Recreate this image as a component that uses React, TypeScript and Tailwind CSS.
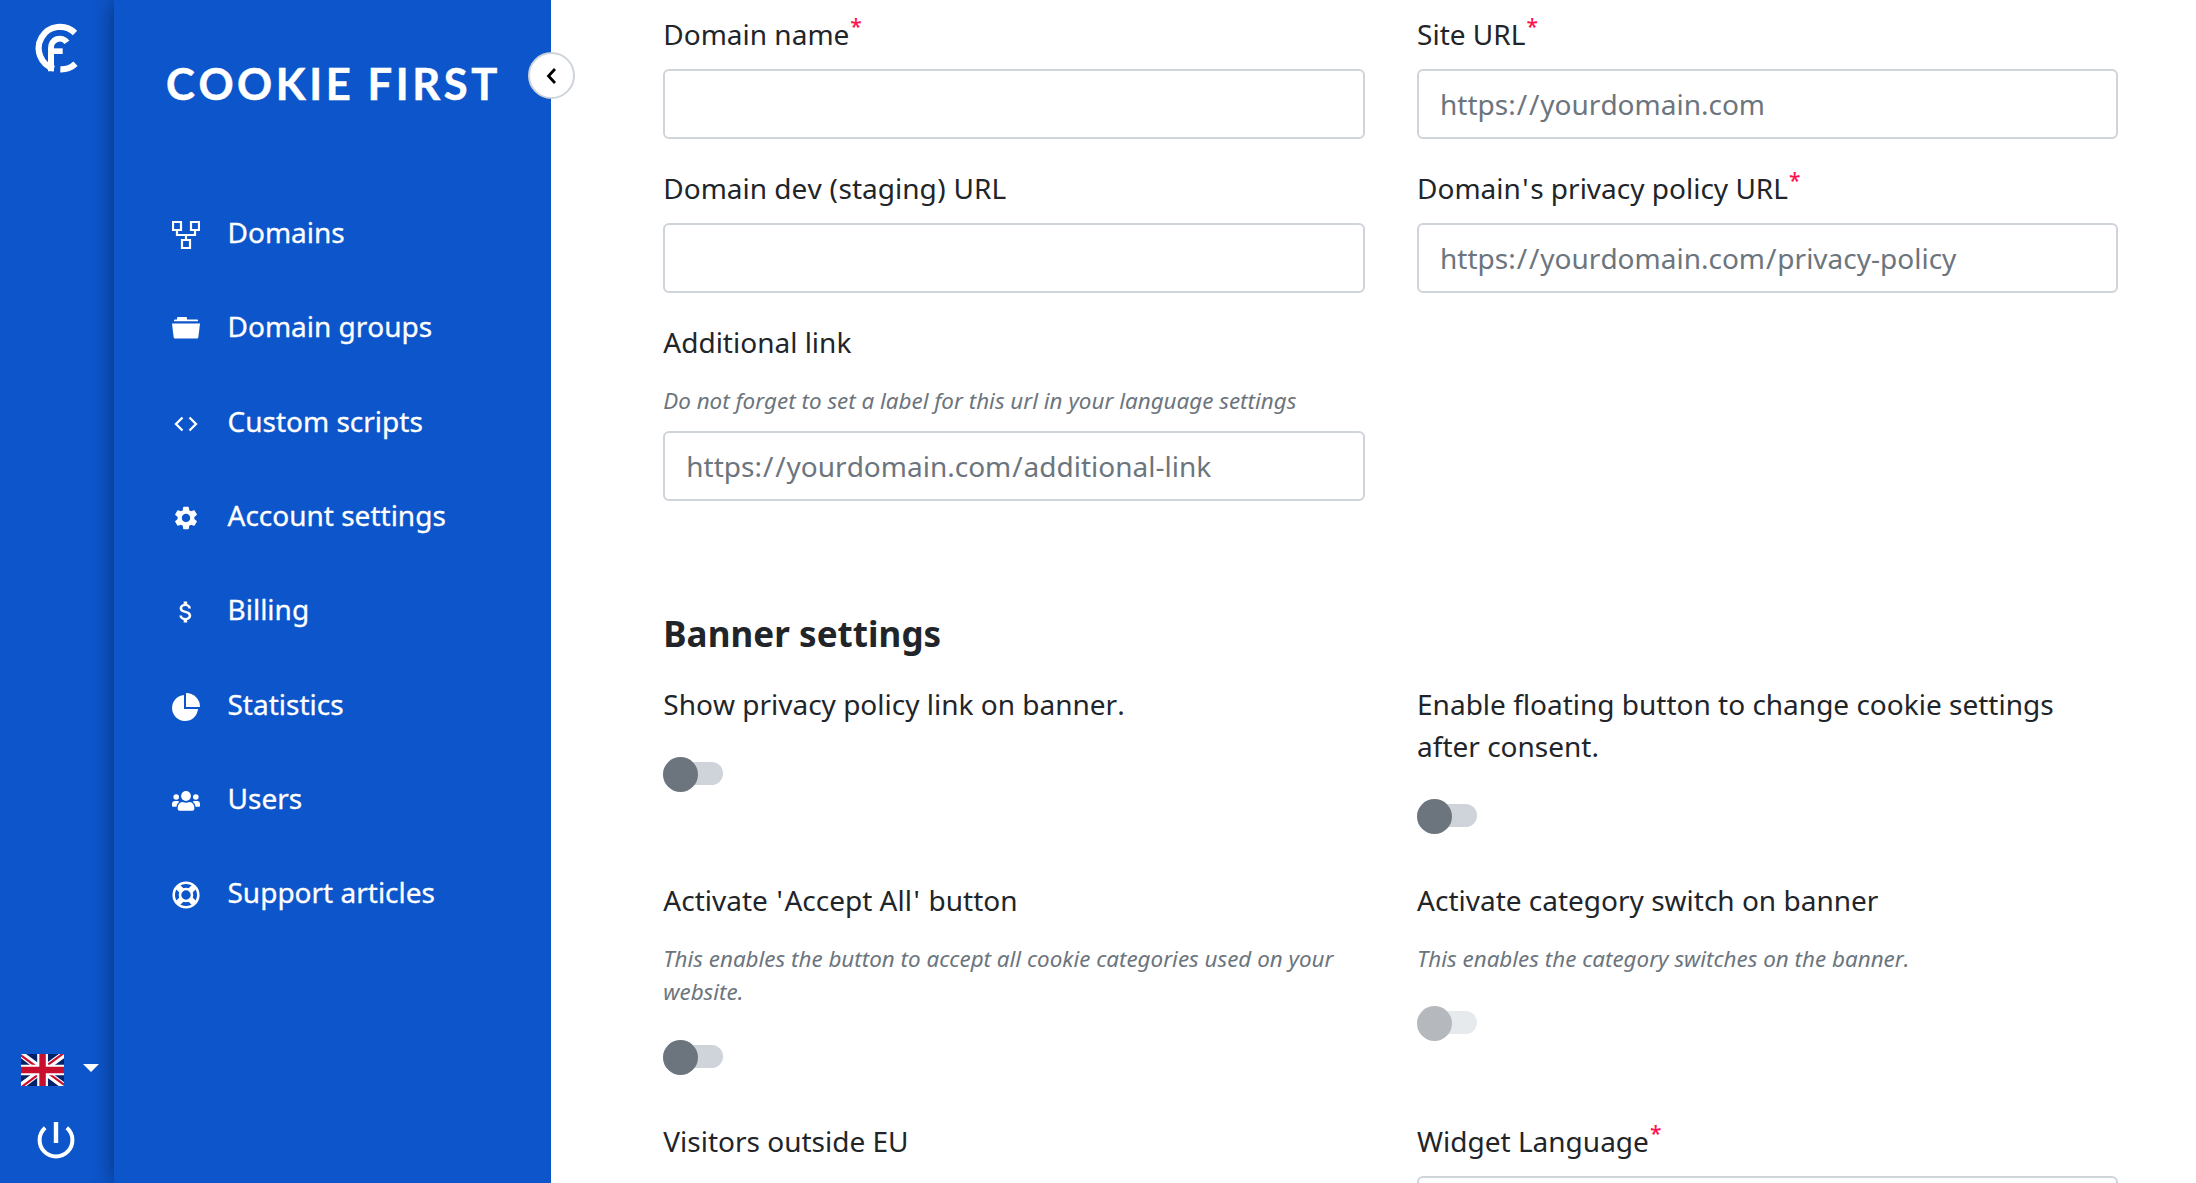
import React from "react";
import { MdSettings, MdAttachMoney } from "react-icons/md";

type IconProps = { className?: string };

function LogoMark() {
  return (
    <svg className="h-[50px] w-[44px]" viewBox="29 25 132 150" fill="none" stroke="#fff">
      <path d="M149 55A64 64 0 1 0 86 162" strokeWidth="18.500" />
      <path d="M77 170V100A26.500 26.500 0 0 1 125 83" strokeWidth="18" />
      <path d="M80 109.500H112" strokeWidth="17" />
      <path d="M105 164A64 64 0 0 0 150.500 147" strokeWidth="18.500" />
    </svg>
  );
}

function DomainsIcon({ className }: IconProps) {
  return (
    <svg className={className} viewBox="0 0 28 28" fill="none" stroke="#fff" strokeWidth="2.2">
      <path d="M1 1h8v8H1zM19 1h8v8h-8zM10 19h8v8h-8zM5 9v5h18V9M14 14v5" />
    </svg>
  );
}

function FolderIcon({ className }: IconProps) {
  return (
    <svg className={className} viewBox="0 0 28 28" fill="#fff">
      <path d="M2 6.300V5.500q0-1 1-1h2V3q0-1 1-1H14q1 0 1 1v1.500h10q1 0 1 1v.8z" />
      <path d="M0 8.500h28l-1.600 13.500q-.2 1.500-1.400 1.500H3Q1.800 23.500 1.600 22z" />
    </svg>
  );
}

function CodeIcon({ className }: IconProps) {
  return (
    <svg className={className} viewBox="0 0 28 28" fill="none" stroke="#fff" strokeWidth="2.3">
      <path d="M10.500 7.500 4 14l6.500 6.500M17.500 7.500 24 14l-6.500 6.500" />
    </svg>
  );
}

function GearIcon({ className }: IconProps) {
  return <MdSettings className={className} />;
}

function DollarIcon({ className }: IconProps) {
  return <MdAttachMoney className={className} />;
}

function PieIcon({ className }: IconProps) {
  return (
    <svg className={className} viewBox="0 0 28 28" fill="#fff">
      <path d="M12 2v14H26A13 13 0 1 1 12 2z" />
      <path d="M14 0a14 14 0 0 1 14 14H14z" />
    </svg>
  );
}

function UsersIcon({ className }: IconProps) {
  return (
    <svg className={className} viewBox="0 0 28 28" fill="#fff">
      <circle cx="14" cy="9" r="4.900" />
      <circle cx="4.200" cy="10" r="2.800" />
      <circle cx="23.800" cy="10" r="2.800" />
      <path d="M5.600 21.500q0-6 5-6.500 3.400 1.500 6.800 0 5 .5 5 6.500 0 2.200-2 2.200H7.600q-2 0-2-2.200z" />
      <path d="M0 19v-1.800Q0 14 3 14h2.500q1 0 1.800.7-2.600 1.800-2.900 5.100H1q-1 0-1-.8zM28 19v-1.800q0-3.200-3-3.200h-2.500q-1 0-1.800.7 2.600 1.800 2.900 5.100H27q1 0 1-.8z" />
    </svg>
  );
}

function SupportIcon({ className }: IconProps) {
  return (
    <svg className={className} viewBox="0 0 28 28" fill="none" stroke="#fff">
      <circle cx="14" cy="14" r="12.300" strokeWidth="2.600" />
      <circle cx="14" cy="14" r="6" strokeWidth="2.600" />
      <path d="M5.500 5.500 10 10M22.500 5.500 18 10M5.500 22.500 10 18M22.500 22.500 18 18" strokeWidth="6" />
    </svg>
  );
}

function Flag() {
  return (
    <svg className="h-8 w-[43px]" viewBox="0 0 640 480" preserveAspectRatio="none">
      <path fill="#012169" d="M0 0h640v480H0z" />
      <path fill="#FFF" d="m75 0 244 181L562 0h78v62L400 241l240 178v61h-80L320 301 81 480H0v-60l239-178L0 64V0h75z" />
      <path fill="#C8102E" d="m424 281 216 159v40L369 281h55zm-184 20 6 35L54 480H0l240-179zM640 0v3L391 191l2-44L590 0h50zM0 0l239 176h-60L0 42V0z" />
      <path fill="#FFF" d="M241 0v480h160V0H241zM0 160v160h640V160H0z" />
      <path fill="#C8102E" d="M0 193v96h640v-96H0zM273 0v480h96V0h-96z" />
    </svg>
  );
}

function PowerIcon() {
  return (
    <svg className="h-[38px] w-[38px]" viewBox="0 0 38 38" fill="none" stroke="#fff">
      <path d="M8.200 6.800A16.400 16.400 0 1 0 29.800 6.800" strokeWidth="4" />
      <path d="M19 1v21" strokeWidth="4.400" />
    </svg>
  );
}

const NAV = [
  { label: "Domains", Icon: DomainsIcon },
  { label: "Domain groups", Icon: FolderIcon },
  { label: "Custom scripts", Icon: CodeIcon },
  { label: "Account settings", Icon: GearIcon },
  { label: "Billing", Icon: DollarIcon },
  { label: "Statistics", Icon: PieIcon },
  { label: "Users", Icon: UsersIcon },
  { label: "Support articles", Icon: SupportIcon },
];

const PUNCTUATION_SPACING: Record<string, string> = {
  "'": "px-[1.5px]",
  "/": "px-[0.95px]",
  "(": "px-[0.6px]",
  ")": "px-[0.6px]",
};

/** Text with a little extra room round its slashes, quotes and parentheses. */
function Spaced({ text }: { text: string }) {
  return (
    <>
      {text.split(/(['/()])/).map((part, i) =>
        PUNCTUATION_SPACING[part] ? (
          <span key={i} className={PUNCTUATION_SPACING[part]}>
            {part}
          </span>
        ) : (
          part
        ),
      )}
    </>
  );
}

function Label({ text, required }: { text: string; required?: boolean }) {
  return (
    <div className="text-[28px] leading-[42px]">
      <Spaced text={text} />
      {required && <sup className="top-[-11px] ml-px text-[21px] leading-none font-medium text-[#ff1150]">*</sup>}
    </div>
  );
}

function Hint({ children }: { children: React.ReactNode }) {
  return <p className="mt-[21px] text-[22.4px] leading-[33.6px] text-[#6c757d] italic">{children}</p>;
}

function Field({ label, required, hint, placeholder = "" }: { label: string; required?: boolean; hint?: string; placeholder?: string }) {
  return (
    <div>
      <Label text={label} required={required} />
      {hint && <Hint>{hint}</Hint>}
      <div
        role="textbox"
        className={
          (hint ? "mt-[13px]" : "mt-3.5") +
          " h-[70px] w-full rounded-[6px] border-2 border-[#ced4da] bg-white px-[21px] text-[28px] leading-[66px] text-[#6c757d]"
        }
      >
        <Spaced text={placeholder} />
      </div>
    </div>
  );
}

function Toggle({ label, hint, disabled }: { label: string; hint?: string; disabled?: boolean }) {
  return (
    <div className="pb-[45px]">
      <Label text={label} />
      {hint && <Hint>{hint}</Hint>}
      <div className={hint ? "mt-[31px] flex h-[35px] w-[60px]" : "mt-8 flex h-[35px] w-[60px]"}>
        <div className={disabled ? "mt-[5px] h-[23px] w-full rounded-full bg-[#e6eaed]" : "mt-[5px] h-[23px] w-full rounded-full bg-[#ced4da]"}>
          <div className={disabled ? "-mt-[5px] size-[35px] rounded-full bg-[#b5b9be]" : "-mt-[5px] size-[35px] rounded-full bg-[#6c757d]"} />
        </div>
      </div>
    </div>
  );
}

export default function App() {
  return (
    <div className="flex h-[1183px] w-[2196px] overflow-hidden bg-white font-['Noto_Sans',sans-serif] text-[#212529] [font-kerning:none]">
      <aside className="flex w-[114px] shrink-0 flex-col bg-[#0d55ca] pt-[23px]">
        <div className="pl-[35px]">
          <LogoMark />
        </div>
        <div className="mt-auto flex items-center pl-[21px]">
          <Flag />
          <div className="-mt-1 ml-[19px] border-x-[8.5px] border-t-[8px] border-x-transparent border-t-white" />
        </div>
        <div className="mt-[35px] mb-6 pl-[37px]">
          <PowerIcon />
        </div>
      </aside>

      <nav className="relative w-[437px] shrink-0 bg-[#0d55ca] text-white shadow-[0_0_20px_rgba(0,0,0,0.45)]">
        <div className="ml-[52px] flex h-[170px] items-start pt-[55px]">
          <span className="font-[Lato] text-[43.5px] leading-[56px] font-bold tracking-[3.6px] whitespace-nowrap [-webkit-text-stroke:0.5px_white] [word-spacing:-1px]">
            COOKIE FIRST
          </span>
        </div>
        <ul className="pt-[15px]">
          {NAV.map(({ label, Icon }) => (
            <li key={label} className="flex h-[94.3px] items-center pl-[58px]">
              <Icon className="mt-1.5 size-7 shrink-0" />
              <span className="ml-[27.5px] text-[28px] leading-[42px] [-webkit-text-stroke:0.3px_white]">{label}</span>
            </li>
          ))}
        </ul>
      </nav>

      <main className="relative flex-1 bg-white pt-[13px] pl-[112.3px]">
        <button className="absolute top-[52px] -left-[23px] flex size-[47px] items-center justify-center rounded-full border-2 border-[#ced4da] bg-white">
          <svg className="mr-px h-4 w-[10px]" viewBox="0 0 10 16" fill="none" stroke="#000" strokeWidth="2.8">
            <path d="M9 1 2.500 8 9 15" />
          </svg>
        </button>
        <section className="grid grid-cols-[701.25px_701.25px] gap-x-[52.5px] gap-y-7">
          <Field label="Domain name" required />
          <Field label="Site URL" required placeholder="https://yourdomain.com" />
          <Field label="Domain dev (staging) URL" />
          <Field label="Domain's privacy policy URL" required placeholder="https://yourdomain.com/privacy-policy" />
          <Field
            label="Additional link"
            hint="Do not forget to set a label for this url in your language settings"
            placeholder="https://yourdomain.com/additional-link"
          />
        </section>
        <h2 className="mt-[107px] text-[35px] leading-[52px] font-bold tracking-[0.05px]">Banner settings</h2>
        <section className="mt-[23px] grid grid-cols-[701.25px_701.25px] gap-x-[52.5px]">
          <Toggle label="Show privacy policy link on banner." />
          <Toggle label="Enable floating button to change cookie settings after consent." />
          <Toggle label="Activate 'Accept All' button" hint="This enables the button to accept all cookie categories used on your website." />
          <Toggle label="Activate category switch on banner" hint="This enables the category switches on the banner." disabled />
          <Label text="Visitors outside EU" />
          <Field label="Widget Language" required />
        </section>
      </main>
    </div>
  );
}
